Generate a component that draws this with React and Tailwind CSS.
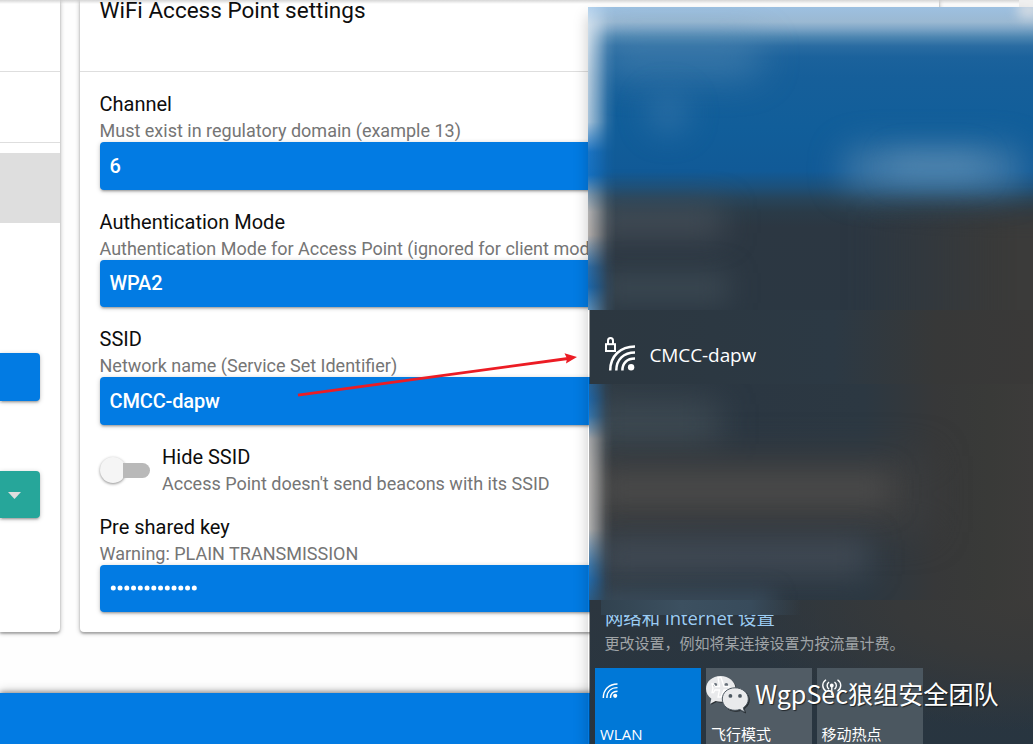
import React from "react";

const RAISED =
  "shadow-[0_2px_2px_0_rgba(0,0,0,0.14),0_3px_1px_-2px_rgba(0,0,0,0.12),0_1px_5px_0_rgba(0,0,0,0.2)]";

function Field({ label, hint, children }) {
  return (
    <div>
      <div className="-ml-[0.5px] h-[27px] text-[20px] leading-[26px] text-[#0d0d0d]">{label}</div>
      <div className="-ml-[0.5px] h-[24px] text-[18px] leading-[25px] text-[#757575]">{hint}</div>
      <div
        className={`flex h-[47.5px] items-center rounded-[4px] bg-[#027be3] px-[9.5px] text-[20px] font-medium tracking-[-0.15px] text-white ${RAISED}`}
      >
        {children}
      </div>
    </div>
  );
}

function WifiArcs({ className }) {
  return (
    <svg className={className} viewBox="0 0 26 26" fill="none" stroke="currentColor">
      <path d="M1.4 26C1.4 11.5 11.5 1.6 26 1.6" strokeWidth="2.5" />
      <path d="M7.6 26C7.6 15 14.5 8 26 8" strokeWidth="2.5" />
      <path d="M13.8 26C13.8 18.5 18 14.2 26 14.2" strokeWidth="2.5" />
      <circle cx="22" cy="22.3" r="3.6" fill="currentColor" stroke="none" />
    </svg>
  );
}

function NetworkIcon() {
  return (
    <svg className="h-[34px] w-[31px]" viewBox="0 0 31 34" fill="none" stroke="white">
      <rect x="1" y="7.2" width="9" height="6.8" strokeWidth="2" />
      <path d="M3 7V3.8C3 .2 8 .2 8 3.8V7" strokeWidth="2" />
      <path d="M5.2 33.5C5.2 19 15.5 9.4 30 9.4" strokeWidth="2.5" />
      <path d="M11.3 33.5C11.3 22.6 18.6 15.5 30 15.5" strokeWidth="2.5" />
      <path d="M17.4 33.5C17.4 26 22 21.6 30 21.6" strokeWidth="2.5" />
      <circle cx="26.1" cy="30.2" r="3.2" fill="white" stroke="none" />
    </svg>
  );
}

function Page() {
  return (
    <div className="flex h-[744px] flex-col bg-[#fefefe]">
      <main className="flex h-[632px] shrink-0 gap-[20px]">
        <aside className="flex w-[60px] shrink-0 flex-col rounded-br-[4px] bg-white shadow-[0_1px_5px_0_rgba(0,0,0,0.3),0_2px_2px_0_rgba(0,0,0,0.2)]">
          <div className="h-[72px] border-b border-[#dedede]" />
          <div className="h-[71px] border-b border-[#dedede]" />
          <div className="mt-[10px] h-[70px] bg-[#dedede]" />
          <div className={`mt-[130px] h-[48px] w-[40px] rounded-r-[4px] bg-[#027be3] ${RAISED}`} />
          <div
            className={`mt-[70px] flex h-[47px] w-[40px] items-center rounded-r-[4px] bg-[#26a69a] pl-[8px] pt-[1px] ${RAISED}`}
          >
            <svg className="h-[7px] w-[13px]" viewBox="0 0 13 7">
              <path d="M0 0H13L6.5 7Z" fill="#dedede" />
            </svg>
          </div>
        </aside>

        <section className="w-[859px] shrink-0 rounded-b-[4px] bg-white shadow-[0_1px_5px_0_rgba(0,0,0,0.3),0_2px_2px_0_rgba(0,0,0,0.2)]">
          <header className="h-[72px] border-b border-[#dedede] px-[19.5px]">
            <h1 className="text-[22.5px] leading-[20px] text-[#0d0d0d]">WiFi Access Point settings</h1>
          </header>
          <div className="flex flex-col gap-[19px] px-[20px] pt-[19px]">
            <Field label="Channel" hint="Must exist in regulatory domain (example 13)">
              6
            </Field>
            <Field
              label="Authentication Mode"
              hint="Authentication Mode for Access Point (ignored for client mode)"
            >
              WPA2
            </Field>
            <Field label="SSID" hint="Network name (Service Set Identifier)">
              CMCC-dapw
            </Field>
            <div className="flex h-[51px] gap-[12px]">
              <div className="flex h-[53px] w-[50px] items-center">
                <span className="size-[26px] shrink-0 rounded-full bg-[#f5f5f5] shadow-[0_1px_3px_rgba(0,0,0,0.45)]" />
                <span className="-ml-[3px] h-[15px] w-[27px] rounded-r-full bg-[#b9b9b9]" />
              </div>
              <div>
                <div className="h-[27px] text-[20px] leading-[26px] text-[#0d0d0d]">Hide SSID</div>
                <div className="text-[18px] leading-[25px] text-[#757575]">
                  Access Point doesn't send beacons with its SSID
                </div>
              </div>
            </div>
            <Field label="Pre shared key" hint="Warning: PLAIN TRANSMISSION">
              <svg className="h-[6px] w-[88px]" viewBox="0 0 88 6" fill="white">
                {Array.from({ length: 13 }, (_, i) => (
                  <circle key={i} cx={3.3 + i * 6.75} cy="3" r="2.5" />
                ))}
              </svg>
            </Field>
          </div>
        </section>
      </main>
      <footer className="mt-[61px] flex-1 bg-[#027be3] shadow-[0_-1px_5px_rgba(0,0,0,0.4),0_-3px_10px_rgba(0,0,0,0.15)]" />
    </div>
  );
}

function Flyout() {
  return (
    <div className="absolute top-[7px] left-[588px] flex h-[737px] w-[445px] flex-col shadow-[0_8px_14px_rgba(0,0,0,0.22)]">
      {/* Frosted top area */}
      <div className="relative h-[303px] shrink-0 overflow-hidden bg-[linear-gradient(to_bottom,#9dc0e1_0px,#9bb9d2_15px,#7ba4c6_22px,#4d86b1_30px,#2a6ca2_39px,#1b629c_50px,#165f9a_70px,#115e9a_120px,#115a97_164px,#1c507a_180px,#27445a_192px,#2a3b48_205px,#2c3742_220px,#2b3742_303px)]">
        <div className="absolute top-[205px] left-[270px] h-[140px] w-[220px] bg-[linear-gradient(to_right,transparent,#3a3a39_65%,#3e3d3c)] blur-[12px]" />
        <div className="absolute top-[30px] left-[10px] h-[40px] w-[165px] rounded-full bg-[#5f92b8]/45 blur-[18px]" />
        <div className="absolute top-[84px] left-[58px] size-[44px] rounded-full bg-[#3a77ab]/50 blur-[14px]" />
        <div className="absolute top-[142px] left-[255px] h-[40px] w-[180px] rounded-full bg-[#5c8bb1]/70 blur-[17px]" />
        <div className="absolute top-[146px] left-[300px] h-[26px] w-[95px] rounded-full bg-[#6f9cbc]/40 blur-[14px]" />
        <div className="absolute top-[200px] left-[0px] h-[28px] w-[135px] bg-[#515a63]/70 blur-[16px]" />
        <div className="absolute top-[266px] left-[10px] h-[30px] w-[130px] bg-[#43515a]/65 blur-[14px]" />
        <div className="absolute inset-y-0 left-0 w-[28px] bg-[linear-gradient(to_bottom,#b4d2ed_0px,#cfdeeb_18px,#b5cbdd_70px,#a9c4da_115px,#1c74c4_145px,#1571c2_168px,#7e98ad_188px,#b3b2b2_205px,#b3aeab_228px,#2c6ca6_260px,#1b68ad_280px,#5c8fba_303px)] [mask-image:linear-gradient(to_right,black,rgba(0,0,0,0.6)_35%,rgba(0,0,0,0.15)_70%,transparent)]" />
        <div className="absolute -top-[5px] -right-[8px] h-[16px] w-[24px] rounded-full bg-[#d6dce3] blur-[6px]" />
      </div>

      <div className="ml-[1px] flex h-[74px] shrink-0 items-center border-l border-black/40 bg-[linear-gradient(to_right,#2c3740,#2c3944_55%,#373838_78%,#3a3938)] bg-clip-padding pl-[15px]">
        <div className="mt-[13px]">
          <NetworkIcon />
        </div>
        <div className="ml-[13.5px] mt-[15px] font-['Open_Sans','Noto_Sans',sans-serif] text-[19px] tracking-[-0.1px] leading-[24px] text-white">
          CMCC-dapw
        </div>
      </div>

      {/* Frosted network list */}
      <div className="relative ml-[1px] h-[216px] shrink-0 overflow-hidden bg-[linear-gradient(to_right,#2f3a43,#2b3742_35%,#2c3842_62%,#373839_78%,#393a38_90%,#3c3b3a)]">
        <div className="absolute top-[20px] left-[0px] h-[40px] w-[130px] bg-[#46525b]/70 blur-[17px]" />
        <div className="absolute top-[72px] -left-[10px] h-[76px] w-[350px] bg-[#3c3d3e] blur-[18px]" />
        <div className="absolute top-[90px] left-[10px] h-[30px] w-[290px] bg-[#4d4e4e]/85 blur-[14px]" />
        <div className="absolute top-[156px] left-[10px] h-[34px] w-[270px] bg-[#454d58]/85 blur-[15px]" />
        <div className="absolute top-[207px] left-[10px] h-[24px] w-[175px] bg-[#3d5163]/75 blur-[10px]" />
        <div className="absolute inset-y-0 left-0 w-[24px] bg-[linear-gradient(to_bottom,#286296_0px,#1f65a5_15px,#3474ab_32px,#a6a7a9_55px,#b2b0ae_90px,#b0b0b0_145px,#3a76aa_182px,#2269a9_196px,#2c5d87_216px)] [mask-image:linear-gradient(to_right,black,rgba(0,0,0,0.6)_35%,rgba(0,0,0,0.15)_70%,transparent)]" />
      </div>

      {/* Settings link and quick actions */}
      <div className="ml-[1px] flex h-[144px] shrink-0 flex-col border-l border-black/40 bg-[radial-gradient(ellipse_300px_130px_at_100%_0%,#3c3b39_0%,#37393a_45%,transparent_100%),linear-gradient(to_bottom,#2c363f,#283540)] bg-clip-padding">
        <div className="h-[15px] shrink-0 pl-[11px]">
          <div className="h-full w-[200px] bg-[linear-gradient(to_right,#31424f,#3c5060_40%,#384b5b_75%,transparent)]" />
        </div>
        <div className="flex h-[15px] shrink-0 items-end overflow-hidden pl-[15px]">
          <span className="whitespace-pre font-['Open_Sans','Noto_Sans_CJK_SC',sans-serif] text-[18.4px] leading-[25px] tracking-[-0.05px] text-[#9bcdf5]">
            网络和 Internet 设置
          </span>
        </div>
        <div className="h-[38px] shrink-0 pt-[1px] pl-[14.5px] font-['Noto_Sans_CJK_SC',sans-serif] text-[15px] leading-[24px] text-[#a0a4a7]">
          更改设置，例如将某连接设置为按流量计费。
        </div>
        <div className="flex h-[76px] shrink-0 gap-[5px] pl-[5px] font-['Noto_Sans_CJK_SC',sans-serif] text-[15px] leading-[20px] text-white">
          <div className="flex w-[106px] flex-col bg-[#0078d7] pl-[5px]">
            <WifiArcs className="mt-[15px] ml-[2px] size-[16px]" />
            <span className="mt-[26px] font-['Open_Sans',sans-serif]">WLAN</span>
          </div>
          <div className="flex w-[106px] flex-col bg-[#515c65] pl-[5px]">
            <span className="mt-[56px]">飞行模式</span>
          </div>
          <div className="flex w-[106px] flex-col bg-[#4b5760] pl-[4.5px]">
            <svg className="mt-[11px] h-[16px] w-[20px]" viewBox="0 0 20 16" fill="none" stroke="white" strokeWidth="1.4">
              <path d="M4 .8C-.3 4 -.3 9 4 12.2M7 3C4.5 5 4.5 8 7 10.2M15.5 .8C19.8 4 19.8 9 15.5 12.2M12.5 3C15 5 15 8 12.5 10.2M9.8 7V16" />
              <circle cx="9.8" cy="6.5" r="1.2" fill="white" />
            </svg>
            <span className="mt-[29px]">移动热点</span>
          </div>
        </div>
      </div>
    </div>
  );
}

function Watermark() {
  return (
    <div className="absolute top-[673px] left-[704px] flex items-start">
      <svg className="h-[42px] w-[46px] drop-shadow-[1px_1px_0.5px_rgba(0,0,0,0.5)]" viewBox="0 0 46 42">
        <path
          d="M16.5 3C8.2 3 2 8.6 2 15.8C2 20 4.1 23.3 7.3 25.7L6.2 30.8L11.6 28C13.2 28.5 15 28.7 17 28.7C25 28.5 31.5 23 31.5 16C31.5 8.6 25 3 16.5 3Z"
          fill="#e9eaec"
        />
        <circle cx="11.3" cy="12" r="1.9" fill="#68717a" />
        <circle cx="22.3" cy="12" r="1.9" fill="#68717a" />
        <path
          d="M14 4.5H17L20 13.5H25V17H20L17 24H14L15.5 17H11L9.5 19.5H8L9 15.2L8 11H9.5L11 13.5H15.5Z"
          fill="none"
          stroke="white"
          strokeWidth="1.3"
        />
        <path
          d="M31 14.8C23.8 14.8 18.3 19.7 18.3 26C18.3 32.4 23.8 37.3 31 37.3C32.8 37.3 34.4 37 35.9 36.5L40.5 39L39.3 34.8C42.3 32.7 44.3 29.6 44.3 26C44.3 19.7 38.4 14.8 31 14.8Z"
          fill="#e9eaec"
          stroke="#4d5861"
          strokeWidth="1"
        />
        <circle cx="26.4" cy="22.9" r="1.9" fill="#4d5861" />
        <circle cx="36" cy="22.9" r="1.9" fill="#4d5861" />
      </svg>
      <span className="ml-[5px] mt-[2px] whitespace-nowrap font-['Noto_Sans_CJK_SC',sans-serif] text-[25.1px] leading-[36px] text-white [text-shadow:1px_1px_1px_rgba(0,0,0,0.6)]">
        WgpSec狼组安全团队
      </span>
    </div>
  );
}

export default function App() {
  return (
    <div className="relative h-[744px] w-[1033px] overflow-hidden font-['Roboto',sans-serif]">
      <Page />
      <div className="absolute inset-x-0 top-0 h-[4px] bg-[linear-gradient(to_bottom,rgba(0,0,0,0.16),transparent)]" />
      <div className="absolute top-0 right-0 h-[7px] w-[14px] bg-[#f0f0f0]" />
      <Flyout />
      <svg className="absolute top-[345px] left-[290px] h-[60px] w-[295px]" viewBox="290 345 295 60">
        <path d="M298 395.2L568 358.5" stroke="#ec1c24" strokeWidth="2.8" />
        <path d="M577 357L564.5 353.3L567 358.5L566 363.5Z" fill="#ec1c24" />
      </svg>
      <Watermark />
    </div>
  );
}
